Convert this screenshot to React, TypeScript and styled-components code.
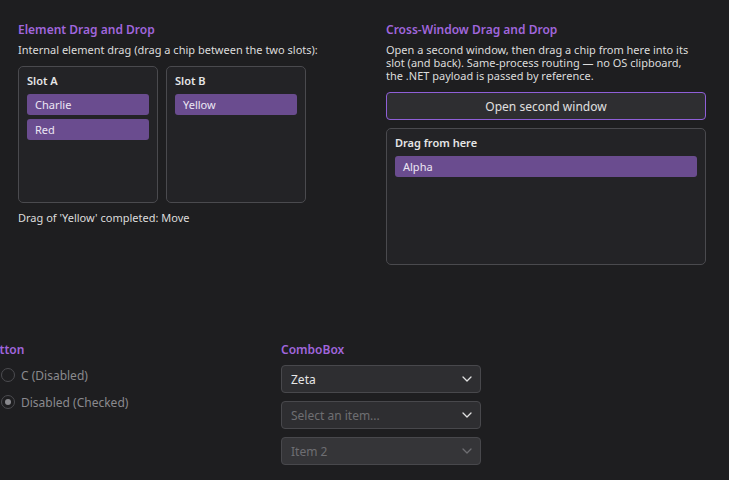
import { FC } from "react";
import styled, { createGlobalStyle } from "styled-components";

const GlobalStyle = createGlobalStyle`
    html, body {
        margin: 0;
        padding: 0;
        background: #1e1e20;
        overflow: hidden;
    }
    body {
        font-family: "Noto Sans", "Open Sans", sans-serif;
        color: #dcdcdc;
    }
`;

const Chevron: FC<{ dim?: boolean }> = ({ dim }) => (
    <svg width="10" height="6" viewBox="0 0 10 6" fill="none">
        <path d="M1 1 L5 5 L9 1" stroke={dim ? "#6e6e72" : "#e0e0e0"} strokeWidth="1.3" strokeLinecap="round" strokeLinejoin="round" />
    </svg>
);

const App: FC = () => {
    return (
        <Page>
            <GlobalStyle />
            <TopRow>
                <Column>
                    <SectionTitle>Element Drag and Drop</SectionTitle>
                    <Description>Internal element drag (drag a chip between the two slots):</Description>
                    <Slots>
                        <Panel $width={140}>
                            <PanelTitle>Slot A</PanelTitle>
                            <Chip>Charlie</Chip>
                            <Chip>Red</Chip>
                        </Panel>
                        <Panel $width={140}>
                            <PanelTitle>Slot B</PanelTitle>
                            <Chip>Yellow</Chip>
                        </Panel>
                    </Slots>
                    <Status>Drag of 'Yellow' completed: Move</Status>
                </Column>
                <Column>
                    <SectionTitle>Cross-Window Drag and Drop</SectionTitle>
                    <Description $narrow>
                        Open a second window, then drag a chip from here into its slot (and back). Same-process routing — no OS clipboard, the .NET payload is passed by reference.
                    </Description>
                    <OpenButton>Open second window</OpenButton>
                    <Panel>
                        <PanelTitle>Drag from here</PanelTitle>
                        <Chip>Alpha</Chip>
                    </Panel>
                </Column>
            </TopRow>

            <BottomRow>
                <RadioColumn>
                    <SectionTitle>RadioButton</SectionTitle>
                    <RadioList>
                        <RadioItem>
                            <RadioCircle />
                            C (Disabled)
                        </RadioItem>
                        <RadioItem>
                            <RadioCircle $checked />
                            Disabled (Checked)
                        </RadioItem>
                    </RadioList>
                </RadioColumn>
                <ComboColumn>
                    <SectionTitle>ComboBox</SectionTitle>
                    <ComboList>
                        <Combo>
                            <ComboText>Zeta</ComboText>
                            <Chevron />
                        </Combo>
                        <Combo>
                            <ComboText $placeholder>Select an item...</ComboText>
                            <Chevron />
                        </Combo>
                        <Combo $disabled>
                            <ComboText $placeholder>Item 2</ComboText>
                            <Chevron dim />
                        </Combo>
                    </ComboList>
                </ComboColumn>
            </BottomRow>
        </Page>
    );
};

export default App;

const Page = styled.div`
    width: 729px;
    height: 480px;
    overflow: hidden;
    box-sizing: border-box;
    padding-top: 20px;
`;

const TopRow = styled.div`
    display: flex;
    gap: 48px;
    padding-left: 18px;
`;

const Column = styled.div`
    display: flex;
    flex-direction: column;
    width: 320px;
`;

const SectionTitle = styled.div`
    font-size: 12px;
    font-weight: 600;
    color: #a066dc;
    line-height: 20px;
    white-space: nowrap;
`;

const Description = styled.div<{ $narrow?: boolean }>`
    font-size: 11px;
    line-height: 13px;
    color: #dcdcdc;
    margin-top: 3px;
    margin-bottom: 10px;
    max-width: ${(p) => (p.$narrow ? "310px" : "none")};
`;

const Slots = styled.div`
    display: flex;
    gap: 8px;
`;

const Panel = styled.div<{ $width?: number }>`
    box-sizing: border-box;
    width: ${(p) => (p.$width ? `${p.$width}px` : "100%")};
    height: 137px;
    background: #232326;
    border: 1px solid #4a4a4e;
    border-radius: 5px;
    padding: 6px 8px;
    display: flex;
    flex-direction: column;
    gap: 4px;
`;

const PanelTitle = styled.div`
    font-size: 11px;
    font-weight: 600;
    line-height: 16px;
    color: #e6e6e6;
    margin-bottom: 1px;
`;

const Chip = styled.div`
    height: 21px;
    box-sizing: border-box;
    background: #6a4c8f;
    border-radius: 3px;
    padding: 0 8px;
    font-size: 11px;
    line-height: 21px;
    color: #ece6f4;
`;

const Status = styled.div`
    font-size: 11px;
    line-height: 14px;
    margin-top: 8px;
    color: #dcdcdc;
`;

const OpenButton = styled.button`
    box-sizing: border-box;
    height: 28px;
    width: 100%;
    margin: 0 0 8px;
    background: #2e2e31;
    border: 1px solid #8f5fd8;
    border-radius: 4px;
    color: #e0e0e0;
    font-family: inherit;
    font-size: 12px;
`;

const BottomRow = styled.div`
    display: flex;
    margin-top: 75px;
    margin-left: -49px;
`;

const RadioColumn = styled.div`
    width: 330px;
    display: flex;
    flex-direction: column;
`;

const RadioList = styled.div`
    display: flex;
    flex-direction: column;
    gap: 9px;
    margin-top: 6px;
    margin-left: 50px;
`;

const RadioItem = styled.div`
    display: flex;
    align-items: center;
    gap: 6px;
    height: 18px;
    font-size: 12px;
    color: #8a8a8e;
`;

const RadioCircle = styled.span<{ $checked?: boolean }>`
    box-sizing: border-box;
    width: 14px;
    height: 14px;
    border-radius: 50%;
    border: 1px solid #4c4c50;
    position: relative;

    &::after {
        content: "";
        display: ${(p) => (p.$checked ? "block" : "none")};
        position: absolute;
        left: 3px;
        top: 3px;
        width: 6px;
        height: 6px;
        border-radius: 50%;
        background: #8a8a8e;
    }
`;

const ComboColumn = styled.div`
    display: flex;
    flex-direction: column;
    width: 200px;
`;

const ComboList = styled.div`
    display: flex;
    flex-direction: column;
    gap: 8px;
    margin-top: 5px;
`;

const Combo = styled.div<{ $disabled?: boolean }>`
    box-sizing: border-box;
    height: 28px;
    display: flex;
    align-items: center;
    justify-content: space-between;
    padding: 0 8px 0 9px;
    background: ${(p) => (p.$disabled ? "#353538" : "#2e2e31")};
    border: 1px solid #48484c;
    border-radius: 4px;
`;

const ComboText = styled.span<{ $placeholder?: boolean }>`
    font-size: 12px;
    color: ${(p) => (p.$placeholder ? "#6e6e72" : "#e6e6e6")};
`;
